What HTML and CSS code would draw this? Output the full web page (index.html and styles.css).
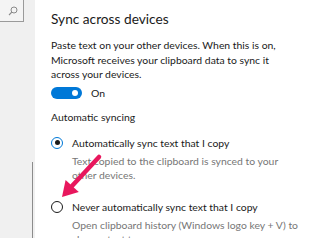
FILE: index.html
```html
<!DOCTYPE html>
<html>
<head>
<meta charset="utf-8">
<link rel="stylesheet" href="styles.css">
</head>
<body>
<div class="page">
  <aside class="sidebar">
    <div class="search">
      <svg class="search-icon" width="10" height="10" viewBox="0 0 10 10"><circle cx="6" cy="4" r="3" fill="none" stroke="#8a8a8a" stroke-width="1"/><line x1="3.8" y1="6.2" x2="1" y2="9" stroke="#8a8a8a" stroke-width="1.1"/></svg>
    </div>
    <div class="scroll"></div>
  </aside>
  <main class="content">
    <h1 class="title">Sync across devices</h1>
    <p class="para">Paste text on your other devices. When this is on, Microsoft receives your clipboard data to sync it across your devices.</p>
    <div class="toggle-row">
      <span class="toggle"><span class="knob"></span></span>
      <span class="toggle-label">On</span>
    </div>
    <div class="section">Automatic syncing</div>
    <div class="radio-row">
      <span class="radio checked"><span class="dot"></span></span>
      <span class="radio-label">Automatically sync text that I copy</span>
    </div>
    <p class="desc">Text copied to the clipboard is synced to your other devices.</p>
    <div class="radio-row second">
      <span class="radio"></span>
      <span class="radio-label">Never automatically sync text that I copy</span>
    </div>
    <p class="desc">Open clipboard history (Windows logo key + V) to choose text to sync.</p>
  </main>
</div>
<svg class="arrow" width="319" height="238" viewBox="0 0 319 238">
  <line x1="99" y1="157" x2="72" y2="186" stroke="#e8175d" stroke-width="4.5" stroke-linecap="round"/>
  <path d="M62 197 L65.6 179.9 L78.8 192.1 Z" fill="#e8175d"/>
</svg>
</body>
</html>
```
FILE: styles.css
```css
html, body {
  margin: 0;
  padding: 0;
  background: #ffffff;
  overflow: hidden;
}
body {
  width: 319px;
  height: 238px;
  font-family: "Lato", "Open Sans", sans-serif;
  color: #1a1a1a;
  position: relative;
}
.page {
  display: flex;
  height: 238px;
  overflow: hidden;
}
.sidebar {
  width: 35px;
  flex: none;
  background: #f0f0f0;
  position: relative;
}
.search {
  width: 24px;
  height: 22px;
  border-right: 1px solid #9a9a9a;
  border-bottom: 1px solid #9a9a9a;
  background: #f4f4f4;
  display: flex;
  align-items: center;
  justify-content: flex-end;
  padding-right: 5px;
  box-sizing: border-box;
}
.search-icon {
  display: block;
}
.scroll {
  position: absolute;
  left: 32px;
  top: 162px;
  bottom: 0;
  width: 1px;
  background: #8c8c8c;
}
.content {
  padding-left: 16px;
  flex: 1;
}
.title {
  margin: 10px 0 0 0;
  font-size: 13.7px;
  font-weight: 400;
  line-height: 18px;
}
.para {
  margin: 10px 0 0 0;
  font-size: 10.4px;
  line-height: 14.5px;
  width: 238px;
}
.toggle-row {
  display: flex;
  align-items: center;
  margin-top: 5px;
  height: 12px;
}
.toggle {
  width: 31px;
  height: 12px;
  border-radius: 6px;
  background: #0078d7;
  position: relative;
  flex: none;
}
.knob {
  position: absolute;
  right: 4px;
  top: 3px;
  width: 6px;
  height: 6px;
  border-radius: 50%;
  background: #fff;
}
.toggle-label {
  margin-left: 9px;
  font-size: 10.4px;
}
.section {
  margin-top: 11px;
  font-size: 10.4px;
  line-height: 15px;
}
.radio-row {
  display: flex;
  align-items: center;
  margin-top: 11px;
  height: 14px;
}
.radio-row.second {
  margin-top: 17px;
}
.radio {
  width: 12px;
  height: 12px;
  border-radius: 50%;
  border: 1.5px solid #1a1a1a;
  box-sizing: border-box;
  display: flex;
  align-items: center;
  justify-content: center;
  flex: none;
}
.radio.checked {
  border-color: #0078d7;
}
.dot {
  width: 5px;
  height: 5px;
  border-radius: 50%;
  background: #1a1a1a;
}
.radio-label {
  margin-left: 9px;
  font-size: 10.4px;
}
.desc {
  margin: 4px 0 0 21px;
  font-size: 10.4px;
  line-height: 14.5px;
  color: #767676;
  width: 228px;
}
.arrow {
  position: absolute;
  left: 0;
  top: 0;
  pointer-events: none;
}
```
